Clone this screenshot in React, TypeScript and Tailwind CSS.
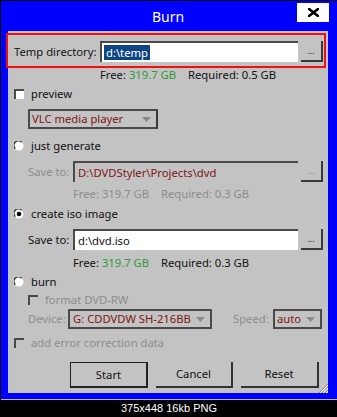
import React from 'react';

function Sunken({ className = '', children }: { className?: string; children?: React.ReactNode }) {
  return (
    <div
      className={`h-[20px] flex items-center border-t-2 border-l-2 border-t-[#4a4a4a] border-l-[#4a4a4a] ${className}`}
    >
      {children}
    </div>
  );
}

function Dots({ disabled }: { disabled?: boolean }) {
  return (
    <div className="ml-[3px] w-[22px] h-[21px] flex items-end justify-center pb-[5px] border-r-2 border-b-2 border-[#3a3a3a]">
      <span className={`text-[9px] leading-none ${disabled ? 'text-[#8c8c8c]' : 'text-[#222]'}`}>...</span>
    </div>
  );
}

function Arrow() {
  return (
    <svg width="9" height="5" viewBox="0 0 9 5" className="shrink-0">
      <path d="M0 0 H9 L4.5 5 Z" fill="#8a8a8a" />
    </svg>
  );
}

function Radio({ checked }: { checked?: boolean }) {
  return (
    <svg width="10" height="10" viewBox="0 0 10 10" className="shrink-0">
      <circle cx="5" cy="5" r="4.5" fill="#fff" />
      <path d="M1.2 7.5 A4.2 4.2 0 0 1 7.5 1.2" fill="none" stroke="#3a3a3a" strokeWidth="1.4" />
      {checked && <circle cx="5" cy="5" r="2.3" fill="#000" />}
    </svg>
  );
}

function DisabledCheck() {
  return <div className="w-[10px] h-[10px] shrink-0 border-t-2 border-l-2 border-[#4a4a4a]" />;
}

function FreeLine({ pad, req, active }: { pad: string; req: string; active?: boolean }) {
  return (
    <div className={`h-[14px] flex items-center ${pad} ${active ? 'text-[#111]' : 'text-[#8c8c8c]'}`}>
      <span className="w-[88px] whitespace-nowrap">
        Free: <span className={active ? 'text-[#2f9a3a]' : ''}>319.7 GB</span>
      </span>
      <span className="whitespace-nowrap">Required: {req}</span>
    </div>
  );
}

export default function App() {
  return (
    <div className="w-[337px] h-[417px] bg-black pl-px pt-px overflow-hidden font-['Noto_Sans',sans-serif] text-[11.25px] text-[#111] leading-none">
      <div className="w-[336px] h-[398px] bg-[#0000ff] flex flex-col pl-[7px]">
        {/* title bar */}
        <div className="relative h-[30px] w-[320px] flex items-center justify-center">
          <span className="text-white text-[14px] mt-[1px]">Burn</span>
          <div className="absolute left-[289px] top-[2px] w-[32px] h-[19px] bg-white flex items-center justify-center">
            <svg width="11" height="9" viewBox="0 0 11 9">
              <path d="M1 1 L10 8 M10 1 L1 8" stroke="#000" strokeWidth="2.6" strokeLinecap="square" />
            </svg>
          </div>
        </div>

        {/* dialog body */}
        <div className="relative w-[320px] h-[362px] bg-[#c3c3c3] flex flex-col">
          <div className="absolute left-[-2px] top-[2px] w-[320px] h-[35px] border-2 border-[#f01010]" />

          <div className="mt-[10px] h-[21px] flex items-center pl-[6px]">
            <span className="w-[86px] whitespace-nowrap">Temp directory:</span>
            <Sunken className="w-[198px] h-[21px] bg-white pl-[2px]">
              <span className="bg-[#0e4585] text-white px-[2px] py-[2px]">d:\temp</span>
            </Sunken>
            <Dots />
          </div>

          <div className="mt-[6px]">
            <FreeLine pad="pl-[92px]" req="0.5 GB" active />
          </div>

          <div className="mt-[5px] h-[14px] flex items-center pl-[6px]">
            <div className="w-[10px] h-[10px] shrink-0 bg-white border-t-2 border-l-2 border-[#4a4a4a]" />
            <span className="ml-[7px]">preview</span>
          </div>

          <div className="mt-[8px] ml-[20px] w-[130px] h-[20px] flex items-center justify-between border-2 border-[#4a4a4a] border-r-[#3a3a3a] pl-[2px] pr-[5px] text-[#7f1515]">
            <span>VLC media player</span>
            <Arrow />
          </div>

          <div className="mt-[10px] h-[14px] flex items-center pl-[6px]">
            <Radio />
            <span className="ml-[7px]">just generate</span>
          </div>

          <div className="mt-[8px] h-[21px] flex items-center pl-[20px]">
            <span className="w-[45px] text-[#8c8c8c] whitespace-nowrap">Save to:</span>
            <Sunken className="w-[225px] h-[21px] pl-[3px] text-[#7f1515]">D:\DVDStyler\Projects\dvd</Sunken>
            <Dots disabled />
          </div>

          <div className="mt-[5px]">
            <FreeLine pad="pl-[65px]" req="0.3 GB" />
          </div>

          <div className="mt-[6px] h-[14px] flex items-center pl-[6px]">
            <Radio checked />
            <span className="ml-[7px]">create iso image</span>
          </div>

          <div className="mt-[8px] h-[21px] flex items-center pl-[20px]">
            <span className="w-[45px] whitespace-nowrap">Save to:</span>
            <Sunken className="w-[225px] h-[21px] bg-white pl-[3px]">d:\dvd.iso</Sunken>
            <Dots />
          </div>

          <div className="mt-[6px]">
            <FreeLine pad="pl-[65px]" req="0.3 GB" active />
          </div>

          <div className="mt-[5px] h-[14px] flex items-center pl-[6px]">
            <Radio />
            <span className="ml-[7px]">burn</span>
          </div>

          <div className="mt-[4px] h-[14px] flex items-center pl-[20px] text-[#8c8c8c]">
            <DisabledCheck />
            <span className="ml-[7px]">format DVD-RW</span>
          </div>

          <div className="mt-[2px] h-[20px] flex items-center pl-[20px]">
            <span className="w-[40px] text-[#8c8c8c]">Device:</span>
            <div className="w-[144px] h-[20px] flex items-center justify-between border-2 border-[#4a4a4a] pl-[3px] pr-[5px] text-[#7f1515]">
              <span className="whitespace-nowrap">G: CDDVDW SH-216BB</span>
              <Arrow />
            </div>
            <span className="ml-[21px] w-[40px] text-[#8c8c8c]">Speed:</span>
            <div className="w-[49px] h-[20px] flex items-center justify-between border-2 border-[#4a4a4a] pl-[2px] pr-[5px] text-[#7f1515]">
              <span>auto</span>
              <Arrow />
            </div>
          </div>

          <div className="mt-[7px] h-[14px] flex items-center pl-[6px] text-[#8c8c8c]">
            <DisabledCheck />
            <span className="ml-[7px]">add error correction data</span>
          </div>

          <div className="mt-[12px] flex pl-[62px] gap-[8px]">
            <div className="w-[78px] h-[26px] flex items-center justify-center border border-[#222] border-r-2 border-b-2">
              Start
            </div>
            <div className="w-[77px] h-[26px] flex items-center justify-center border-r-2 border-b-2 border-[#333]">
              Cancel
            </div>
            <div className="w-[78px] h-[26px] flex items-center justify-center border-r-2 border-b-2 border-[#333]">
              Reset
            </div>
          </div>

          <svg width="11" height="11" viewBox="0 0 11 11" className="absolute right-0 bottom-0">
            <path d="M11 2 L2 11 M11 5 L5 11 M11 8 L8 11" stroke="#8a8a8a" strokeWidth="1" />
            <path d="M11 3 L3 11 M11 6 L6 11 M11 9 L9 11" stroke="#ffffff" strokeWidth="1" />
          </svg>
        </div>
      </div>
      <div className="h-px bg-[#b8b8d8]" />
      <div className="h-[17px] flex items-center justify-center text-white text-[11px] font-['Liberation_Sans',Arial,sans-serif]">
        375x448 16kb PNG
      </div>
    </div>
  );
}
